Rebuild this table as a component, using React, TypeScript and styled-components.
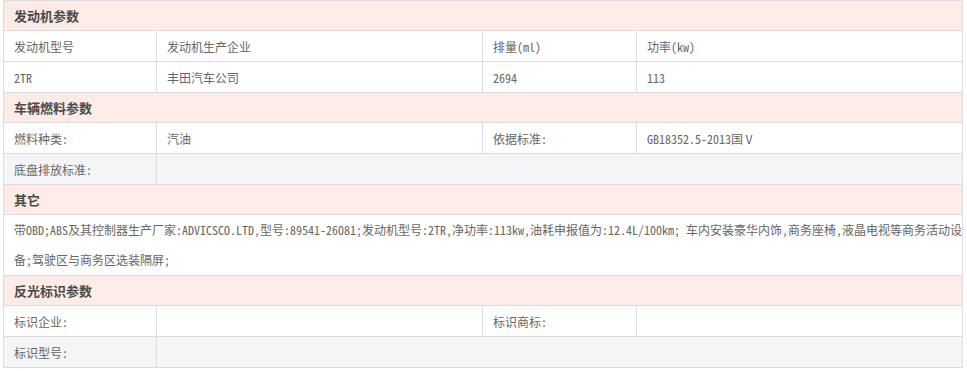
import React from 'react';
import styled, { createGlobalStyle } from 'styled-components';

const BORDER = '#dcdcdc';
const HEAD_BG = '#fdebe8';
const SHADE_BG = '#f4f5f7';
const TEXT = '#666666';
const HEAD_TEXT = '#4a4a4a';

const GlobalStyle = createGlobalStyle`
  html, body {
    margin: 0;
    padding: 0;
    background: #ffffff;
  }
`;

type Row = {
  shaded?: boolean;
  cells: { text: string; span?: number }[];
};

type Section = {
  title: string;
  rows?: Row[];
  note?: string[];
};

const sections: Section[] = [
  {
    title: '发动机参数',
    rows: [
      {
        cells: [
          { text: '发动机型号' },
          { text: '发动机生产企业' },
          { text: '排量(ml)' },
          { text: '功率(kw)' },
        ],
      },
      {
        cells: [
          { text: '2TR' },
          { text: '丰田汽车公司' },
          { text: '2694' },
          { text: '113' },
        ],
      },
    ],
  },
  {
    title: '车辆燃料参数',
    rows: [
      {
        cells: [
          { text: '燃料种类:' },
          { text: '汽油' },
          { text: '依据标准:' },
          { text: 'GB18352.5-2013国Ⅴ' },
        ],
      },
      {
        shaded: true,
        cells: [{ text: '底盘排放标准:' }, { text: '', span: 3 }],
      },
    ],
  },
  {
    title: '其它',
    note: [
      '带OBD;ABS及其控制器生产厂家:ADVICSCO.LTD,型号:89541-26081;发动机型号:2TR,净功率:113kw,油耗申报值为:12.4L/100km; 车内安装豪华内饰,商务座椅,液晶电视等商务活动设',
      '备;驾驶区与商务区选装隔屏;',
    ],
  },
  {
    title: '反光标识参数',
    rows: [
      {
        cells: [
          { text: '标识企业:' },
          { text: '' },
          { text: '标识商标:' },
          { text: '' },
        ],
      },
      {
        shaded: true,
        cells: [{ text: '标识型号:' }, { text: '', span: 3 }],
      },
    ],
  },
];

export default function App() {
  return (
    <>
      <GlobalStyle />
      <Page>
        <Sheet>
          {sections.map((section) => (
            <React.Fragment key={section.title}>
              <SectionHead>{section.title}</SectionHead>
              {section.rows?.map((row, r) =>
                row.cells.map((cell, c) => (
                  <Cell
                    key={`${section.title}-${r}-${c}`}
                    $shaded={row.shaded}
                    $span={cell.span || 1}
                  >
                    {cell.text}
                  </Cell>
                ))
              )}
              {section.note && (
                <Note>
                  {section.note.map((line) => (
                    <NoteLine key={line}>{line}</NoteLine>
                  ))}
                </Note>
              )}
            </React.Fragment>
          ))}
        </Sheet>
      </Page>
    </>
  );
}

const Page = styled.div`
  padding: 0 3px;
  font-family: 'Noto Sans Mono CJK SC', 'Noto Sans CJK SC', 'DejaVu Sans',
    sans-serif;
`;

const Sheet = styled.div`
  display: grid;
  grid-template-columns: 152px 325px 153px 325px;
  gap: 1px;
  width: 958px;
  border: 1px solid ${BORDER};
  background: ${BORDER};
`;

const SectionHead = styled.div`
  grid-column: 1 / -1;
  height: 29px;
  padding-left: 10px;
  display: flex;
  align-items: center;
  background: ${HEAD_BG};
  color: ${HEAD_TEXT};
  font-size: 13px;
  font-weight: bold;
`;

const Cell = styled.div<{ $shaded?: boolean; $span: number }>`
  grid-column: span ${(p) => p.$span};
  height: 30px;
  padding-left: 10px;
  display: flex;
  align-items: center;
  background: ${(p) => (p.$shaded ? SHADE_BG : '#ffffff')};
  color: ${TEXT};
  font-size: 12px;
  white-space: nowrap;
`;

const Note = styled.div`
  grid-column: 1 / -1;
  padding-left: 10px;
  background: #ffffff;
  color: ${TEXT};
  font-size: 12px;
  overflow: hidden;
`;

const NoteLine = styled.div`
  height: 30px;
  line-height: 30px;
  white-space: nowrap;
`;
